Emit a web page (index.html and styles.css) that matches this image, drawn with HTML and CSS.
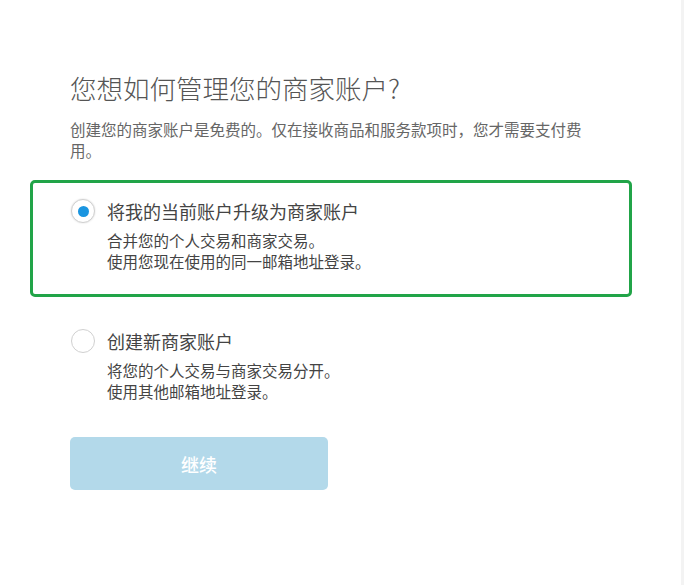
FILE: index.html
```html
<!DOCTYPE html>
<html lang="zh-CN">
<head>
  <meta charset="UTF-8" />
  <title>商家账户</title>
  <link rel="stylesheet" href="styles.css">
</head>
<body>
  <main class="page">
    <h1>您想如何管理您的商家账户?</h1>
    <p class="intro">创建您的商家账户是免费的。仅在接收商品和服务款项时，您才需要支付费用。</p>

    <div class="options" role="radiogroup">
      <label class="option selected">
        <span class="radio"></span>
        <span class="option-body">
          <span class="option-title">将我的当前账户升级为商家账户</span>
          <span class="option-desc">合并您的个人交易和商家交易。<br>使用您现在使用的同一邮箱地址登录。</span>
        </span>
      </label>
      <label class="option">
        <span class="radio"></span>
        <span class="option-body">
          <span class="option-title">创建新商家账户</span>
          <span class="option-desc">将您的个人交易与商家交易分开。<br>使用其他邮箱地址登录。</span>
        </span>
      </label>
    </div>

    <button class="continue" type="button">继续</button>
  </main>
</body>
</html>
```

FILE: styles.css
```css
/* Reset */
* {
  box-sizing: border-box;
  margin: 0;
  padding: 0;
}
body {
  font-family: "Noto Sans CJK SC", "Noto Sans", sans-serif;
  background: #fff;
  color: #444;
}
.page {
  min-height: 585px;
  padding: 70px 0 0 70px;
  border-right: 3px solid #f3f3f3;
}
h1 {
  font-size: 26.5px;
  font-weight: 300;
  line-height: 36px;
  color: #555;
}
.intro {
  width: 525px;
  margin-top: 13px;
  font-size: 15.5px;
  line-height: 21px;
  color: #666;
}
/* Options */
.options {
  display: flex;
  flex-direction: column;
  gap: 13px;
  margin: 19px 0 0 -40px;
  width: 602px;
}
.option {
  display: flex;
  gap: 12px;
  padding: 15px 20px 22px 38px;
  border: 3px solid transparent;
  border-radius: 5px;
  cursor: pointer;
}
.option.selected {
  border-color: #21a448;
}
.radio {
  flex: none;
  width: 24px;
  height: 24px;
  margin-top: 1px;
  border: 1px solid #d0d0d0;
  border-radius: 50%;
  background: #fff;
  display: flex;
  align-items: center;
  justify-content: center;
}
.selected .radio {
  box-shadow: 0 0 2px rgba(0, 0, 0, 0.15);
}
.selected .radio::after {
  content: "";
  width: 11px;
  height: 11px;
  border-radius: 50%;
  background: #1a95e0;
}
.option-body {
  display: flex;
  flex-direction: column;
}
.option-title {
  font-size: 18px;
  line-height: 26px;
  color: #444;
}
.option-desc {
  margin-top: 6px;
  font-size: 15.5px;
  line-height: 21px;
  color: #444;
}
/* Button */
.continue {
  margin-top: 10px;
  width: 258px;
  height: 53px;
  border: none;
  border-radius: 5px;
  background: #b3d9ea;
  color: #fff;
  font-family: inherit;
  font-size: 18px;
  font-weight: 500;
}
```
